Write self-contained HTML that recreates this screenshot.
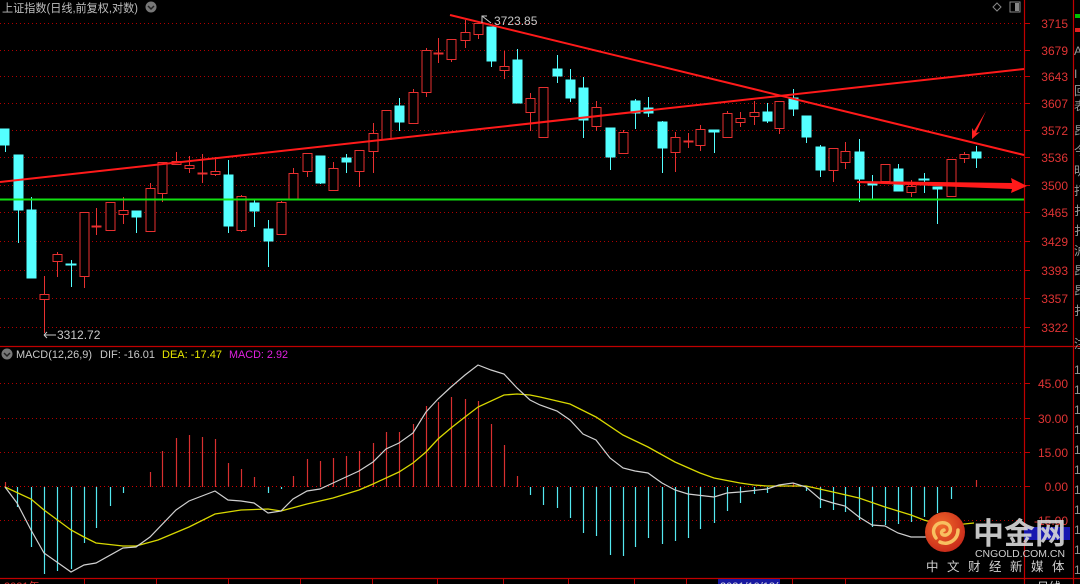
<!DOCTYPE html>
<html><head><meta charset="utf-8"><style>
html,body{margin:0;padding:0;background:#000;width:1080px;height:584px;overflow:hidden}
svg{display:block}
text{font-family:"Liberation Sans","Noto Sans CJK SC",sans-serif}
</style></head><body>
<svg width="1080" height="584" viewBox="0 0 1080 584" xmlns="http://www.w3.org/2000/svg">
<rect width="1080" height="584" fill="#000"/>
<g stroke="#b00000" stroke-width="1" stroke-dasharray="1,3">
<line x1="0" y1="23.5" x2="1024" y2="23.5"/><line x1="0" y1="50.5" x2="1024" y2="50.5"/><line x1="0" y1="76.5" x2="1024" y2="76.5"/><line x1="0" y1="103.5" x2="1024" y2="103.5"/><line x1="0" y1="130.5" x2="1024" y2="130.5"/><line x1="0" y1="157.5" x2="1024" y2="157.5"/><line x1="0" y1="185.5" x2="1024" y2="185.5"/><line x1="0" y1="212.5" x2="1024" y2="212.5"/><line x1="0" y1="241.5" x2="1024" y2="241.5"/><line x1="0" y1="270.5" x2="1024" y2="270.5"/><line x1="0" y1="298.5" x2="1024" y2="298.5"/><line x1="0" y1="327.5" x2="1024" y2="327.5"/>
<line x1="0" y1="383.5" x2="1024" y2="383.5"/><line x1="0" y1="418.5" x2="1024" y2="418.5"/><line x1="0" y1="452.5" x2="1024" y2="452.5"/><line x1="0" y1="486.5" x2="1024" y2="486.5" stroke="#d00000"/><line x1="0" y1="520.5" x2="1024" y2="520.5"/>
</g>
<g stroke="#c00000" stroke-width="1.2" fill="none">
<line x1="0" y1="346.5" x2="1080" y2="346.5"/>
<line x1="0" y1="578.5" x2="1080" y2="578.5"/>
<line x1="1024.5" y1="0" x2="1024.5" y2="584"/>
<line x1="1073.5" y1="0" x2="1073.5" y2="584"/>
</g>
<g stroke="#c00000" stroke-width="1">
<line x1="1024" y1="23.5" x2="1030" y2="23.5"/><line x1="1024" y1="50.5" x2="1030" y2="50.5"/><line x1="1024" y1="76.5" x2="1030" y2="76.5"/><line x1="1024" y1="103.5" x2="1030" y2="103.5"/><line x1="1024" y1="130.5" x2="1030" y2="130.5"/><line x1="1024" y1="157.5" x2="1030" y2="157.5"/><line x1="1024" y1="185.5" x2="1030" y2="185.5"/><line x1="1024" y1="212.5" x2="1030" y2="212.5"/><line x1="1024" y1="241.5" x2="1030" y2="241.5"/><line x1="1024" y1="270.5" x2="1030" y2="270.5"/><line x1="1024" y1="298.5" x2="1030" y2="298.5"/><line x1="1024" y1="327.5" x2="1030" y2="327.5"/>
<line x1="1024" y1="383.5" x2="1030" y2="383.5"/><line x1="1024" y1="418.5" x2="1030" y2="418.5"/><line x1="1024" y1="452.5" x2="1030" y2="452.5"/><line x1="1024" y1="486.5" x2="1030" y2="486.5"/>
<line x1="84.5" y1="578" x2="84.5" y2="584"/><line x1="156.5" y1="578" x2="156.5" y2="584"/><line x1="228.5" y1="578" x2="228.5" y2="584"/><line x1="300.5" y1="578" x2="300.5" y2="584"/><line x1="372.5" y1="578" x2="372.5" y2="584"/><line x1="437.5" y1="578" x2="437.5" y2="584"/><line x1="503.5" y1="578" x2="503.5" y2="584"/><line x1="568.5" y1="578" x2="568.5" y2="584"/><line x1="634.5" y1="578" x2="634.5" y2="584"/><line x1="686.5" y1="578" x2="686.5" y2="584"/><line x1="792.5" y1="578" x2="792.5" y2="584"/><line x1="845.5" y1="578" x2="845.5" y2="584"/>
</g>
<g fill="#e03434" font-size="12" text-anchor="end">
<text x="1068" y="28">3715</text><text x="1068" y="55">3679</text><text x="1068" y="81">3643</text><text x="1068" y="108">3607</text><text x="1068" y="135">3572</text><text x="1068" y="162">3536</text><text x="1068" y="190">3500</text><text x="1068" y="217">3465</text><text x="1068" y="246">3429</text><text x="1068" y="275">3393</text><text x="1068" y="303">3357</text><text x="1068" y="332">3322</text>
<text x="1068" y="388">45.00</text><text x="1068" y="423">30.00</text><text x="1068" y="457">15.00</text><text x="1068" y="491">0.00</text><text x="1068" y="525">-15.00</text>
</g>
<rect x="1024" y="527" width="46" height="13" fill="#1818b0"/>
<rect x="1075" y="14" width="5" height="4" fill="#00c000"/><rect x="1075" y="28" width="5" height="4" fill="#e02020"/>
<g fill="#999" font-size="12"><text x="1074" y="55">A</text><text x="1074" y="78">I</text><text x="1074" y="95">回</text><text x="1074" y="110">表</text><text x="1074" y="135">昂</text><text x="1074" y="155">今</text><text x="1074" y="175">明</text><text x="1074" y="195">打</text><text x="1074" y="215">扌</text><text x="1074" y="235">扌</text><text x="1074" y="255">沪</text><text x="1074" y="275">昂</text><text x="1074" y="295">昂</text><text x="1074" y="315">扌</text><text x="1074" y="348">注</text>
<text x="1074" y="374">1</text><text x="1074" y="394">1</text><text x="1074" y="414">1</text><text x="1074" y="434">1</text><text x="1074" y="454">1</text><text x="1074" y="474">1</text><text x="1074" y="494">1</text><text x="1074" y="514">1</text><text x="1074" y="534">1</text><text x="1074" y="554">1</text><text x="1074" y="574">1</text></g>
<text x="2" y="12" fill="#bdbdbd" font-size="11.5" textLength="136" lengthAdjust="spacingAndGlyphs">上证指数(日线,前复权,对数)</text>
<circle cx="151" cy="7" r="5.5" fill="#777"/><path d="M148 6 L151 9 L154 6" stroke="#222" stroke-width="1.5" fill="none"/>
<path d="M997 3 L1001 7 L997 11 L993 7 Z" stroke="#888" fill="none"/>
<rect x="1010" y="2" width="10" height="10" stroke="#888" fill="none"/><rect x="1015" y="3" width="4" height="8" fill="#888"/>
<g stroke-width="1">
<g stroke="#54ffff" fill="#54ffff">
<line x1="5.5" y1="129" x2="5.5" y2="152"/><rect x="0" y="129" width="9" height="16"/>
<line x1="18.5" y1="155" x2="18.5" y2="243"/><rect x="14" y="155" width="9" height="55"/>
<line x1="31.5" y1="197" x2="31.5" y2="278"/><rect x="27" y="210" width="9" height="68"/>
<line x1="71.5" y1="260" x2="71.5" y2="287"/><rect x="66" y="264" width="10" height="1"/>
<line x1="136.5" y1="211" x2="136.5" y2="233"/><rect x="132" y="211" width="9" height="6"/>
<line x1="228.5" y1="160" x2="228.5" y2="233"/><rect x="224" y="175" width="9" height="51"/>
<line x1="254.5" y1="200" x2="254.5" y2="227"/><rect x="250" y="203" width="9" height="8"/>
<line x1="268.5" y1="220" x2="268.5" y2="267"/><rect x="264" y="229" width="9" height="12"/>
<line x1="320.5" y1="156" x2="320.5" y2="184"/><rect x="316" y="156" width="9" height="27"/>
<line x1="346.5" y1="154" x2="346.5" y2="173"/><rect x="342" y="158" width="9" height="4"/>
<line x1="399.5" y1="98" x2="399.5" y2="131"/><rect x="395" y="106" width="9" height="16"/>
<line x1="491.5" y1="27" x2="491.5" y2="67"/><rect x="487" y="27" width="9" height="34"/>
<line x1="517.5" y1="49" x2="517.5" y2="103"/><rect x="513" y="60" width="9" height="43"/>
<line x1="557.5" y1="55" x2="557.5" y2="83"/><rect x="553" y="69" width="9" height="7"/>
<line x1="570.5" y1="69" x2="570.5" y2="102"/><rect x="566" y="80" width="9" height="18"/>
<line x1="583.5" y1="77" x2="583.5" y2="138"/><rect x="579" y="88" width="9" height="32"/>
<line x1="610.5" y1="128" x2="610.5" y2="170"/><rect x="606" y="128" width="9" height="29"/>
<line x1="635.5" y1="99" x2="635.5" y2="129"/><rect x="631" y="101" width="9" height="12"/>
<line x1="648.5" y1="97" x2="648.5" y2="117"/><rect x="644" y="108" width="9" height="5"/>
<line x1="662.5" y1="121" x2="662.5" y2="173"/><rect x="658" y="122" width="9" height="26"/>
<line x1="714.5" y1="130" x2="714.5" y2="153"/><rect x="709" y="130" width="10" height="2"/>
<line x1="767.5" y1="103" x2="767.5" y2="123"/><rect x="763" y="112" width="9" height="9"/>
<line x1="793.5" y1="89" x2="793.5" y2="116"/><rect x="789" y="98" width="9" height="11"/>
<line x1="806.5" y1="116" x2="806.5" y2="143"/><rect x="802" y="116" width="9" height="21"/>
<line x1="820.5" y1="145" x2="820.5" y2="177"/><rect x="816" y="147" width="9" height="23"/>
<line x1="859.5" y1="139" x2="859.5" y2="202"/><rect x="855" y="152" width="9" height="27"/>
<line x1="872.5" y1="175" x2="872.5" y2="199"/><rect x="868" y="183" width="9" height="2"/>
<line x1="898.5" y1="164" x2="898.5" y2="191"/><rect x="894" y="169" width="9" height="22"/>
<line x1="924.5" y1="173" x2="924.5" y2="193"/><rect x="919" y="179" width="10" height="1"/>
<line x1="937.5" y1="187" x2="937.5" y2="224"/><rect x="933" y="187" width="9" height="2"/>
<line x1="976.5" y1="146" x2="976.5" y2="168"/><rect x="972" y="152" width="9" height="6"/>
</g>
<g stroke="#e83030" fill="#000">
<line x1="44.5" y1="276" x2="44.5" y2="333"/><rect x="40" y="294.5" width="9" height="5"/>
<line x1="57.5" y1="252" x2="57.5" y2="277"/><rect x="53" y="254.5" width="9" height="7"/>
<line x1="84.5" y1="212" x2="84.5" y2="288"/><rect x="80" y="212.5" width="9" height="64"/>
<line x1="96.5" y1="208" x2="96.5" y2="235"/><rect x="92" y="226" width="9" height="1"/>
<line x1="110.5" y1="202" x2="110.5" y2="231"/><rect x="106" y="202.5" width="9" height="28"/>
<line x1="123.5" y1="197" x2="123.5" y2="224"/><rect x="119" y="210.5" width="9" height="4"/>
<line x1="150.5" y1="183" x2="150.5" y2="232"/><rect x="146" y="188.5" width="9" height="43"/>
<line x1="162.5" y1="162" x2="162.5" y2="202"/><rect x="158" y="162.5" width="9" height="31"/>
<line x1="176.5" y1="152" x2="176.5" y2="165"/><rect x="172" y="161.5" width="9" height="3"/>
<line x1="189.5" y1="156" x2="189.5" y2="173"/><rect x="185" y="165.5" width="9" height="3"/>
<line x1="202.5" y1="154" x2="202.5" y2="183"/><rect x="198" y="173" width="9" height="1"/>
<line x1="215.5" y1="157" x2="215.5" y2="176"/><rect x="211" y="171.5" width="9" height="3"/>
<line x1="241.5" y1="195" x2="241.5" y2="232"/><rect x="237" y="196.5" width="9" height="34"/>
<line x1="281.5" y1="201" x2="281.5" y2="234"/><rect x="277" y="202.5" width="9" height="32"/>
<line x1="293.5" y1="168" x2="293.5" y2="199"/><rect x="289" y="173.5" width="9" height="26"/>
<line x1="307.5" y1="153" x2="307.5" y2="177"/><rect x="303" y="153.5" width="9" height="18"/>
<line x1="333.5" y1="162" x2="333.5" y2="190"/><rect x="329" y="168.5" width="9" height="22"/>
<line x1="359.5" y1="150" x2="359.5" y2="187"/><rect x="355" y="150.5" width="9" height="21"/>
<line x1="373.5" y1="123" x2="373.5" y2="173"/><rect x="369" y="133.5" width="9" height="18"/>
<line x1="386.5" y1="110" x2="386.5" y2="139"/><rect x="382" y="110.5" width="9" height="29"/>
<line x1="413.5" y1="89" x2="413.5" y2="123"/><rect x="409" y="92.5" width="9" height="31"/>
<line x1="426.5" y1="48" x2="426.5" y2="97"/><rect x="422" y="50.5" width="9" height="42"/>
<line x1="438.5" y1="38" x2="438.5" y2="63"/><rect x="434" y="53" width="9" height="1"/>
<line x1="451.5" y1="39" x2="451.5" y2="62"/><rect x="447" y="39.5" width="9" height="20"/>
<line x1="465.5" y1="20" x2="465.5" y2="48"/><rect x="461" y="32.5" width="9" height="8"/>
<line x1="478.5" y1="23" x2="478.5" y2="39"/><rect x="474" y="23.5" width="9" height="11"/>
<line x1="504.5" y1="51" x2="504.5" y2="79"/><rect x="500" y="66.5" width="9" height="4"/>
<line x1="530.5" y1="93" x2="530.5" y2="131"/><rect x="526" y="98.5" width="9" height="14"/>
<line x1="543.5" y1="87" x2="543.5" y2="137"/><rect x="539" y="87.5" width="9" height="50"/>
<line x1="596.5" y1="101" x2="596.5" y2="131"/><rect x="592" y="107.5" width="9" height="19"/>
<line x1="623.5" y1="130" x2="623.5" y2="153"/><rect x="619" y="132.5" width="9" height="21"/>
<line x1="675.5" y1="132" x2="675.5" y2="172"/><rect x="671" y="137.5" width="9" height="15"/>
<line x1="688.5" y1="133" x2="688.5" y2="148"/><rect x="684" y="141" width="9" height="1"/>
<line x1="700.5" y1="125" x2="700.5" y2="151"/><rect x="696" y="129.5" width="9" height="16"/>
<line x1="727.5" y1="111" x2="727.5" y2="137"/><rect x="723" y="113.5" width="9" height="24"/>
<line x1="740.5" y1="112" x2="740.5" y2="127"/><rect x="736" y="118.5" width="9" height="4"/>
<line x1="754.5" y1="101" x2="754.5" y2="125"/><rect x="750" y="112.5" width="9" height="4"/>
<line x1="779.5" y1="101" x2="779.5" y2="134"/><rect x="775" y="101.5" width="9" height="27"/>
<line x1="833.5" y1="148" x2="833.5" y2="182"/><rect x="829" y="148.5" width="9" height="22"/>
<line x1="845.5" y1="142" x2="845.5" y2="169"/><rect x="841" y="151.5" width="9" height="11"/>
<line x1="885.5" y1="164" x2="885.5" y2="182"/><rect x="881" y="164.5" width="9" height="17"/>
<line x1="911.5" y1="180" x2="911.5" y2="197"/><rect x="907" y="186.5" width="9" height="6"/>
<line x1="951.5" y1="159" x2="951.5" y2="197"/><rect x="947" y="159.5" width="9" height="37"/>
<line x1="964.5" y1="152" x2="964.5" y2="163"/><rect x="960" y="154.5" width="9" height="4"/>
</g>
</g>
<line x1="0" y1="199.5" x2="1024" y2="199.5" stroke="#10e010" stroke-width="2"/>
<line x1="0" y1="182" x2="1024" y2="69" stroke="#ff1a1a" stroke-width="2"/>
<line x1="450" y1="15" x2="1024" y2="155" stroke="#ff1a1a" stroke-width="2"/>
<path d="M857 181 L1012 183 L1011 178 L1027 186 L1011 193 L1012 189 L857 183 Z" fill="#ff1a1a"/>
<path d="M986 111 L976 133 L980 132 L972 139 L972 128 L974 131 Z" fill="#ff2020"/>
<text x="494" y="25" fill="#c8c8c8" font-size="12">3723.85</text>
<path d="M482 23 L482 16 L487 16 M482 16 L491 23" stroke="#c8c8c8" stroke-width="1" fill="none"/>
<text x="57" y="339" fill="#c8c8c8" font-size="12">3312.72</text>
<path d="M44 335 L56 335 M44 335 L47 332 M44 335 L47 338" stroke="#c8c8c8" stroke-width="1" fill="none"/>
<circle cx="7" cy="354" r="5.5" fill="#777"/><path d="M4 353 L7 356 L10 353" stroke="#222" stroke-width="1.5" fill="none"/>
<text x="16" y="358" font-size="11" fill="#c8c8c8" textLength="76" lengthAdjust="spacingAndGlyphs">MACD(12,26,9)</text>
<text x="100" y="358" font-size="11" fill="#c8c8c8" textLength="55" lengthAdjust="spacingAndGlyphs">DIF: -16.01</text>
<text x="162" y="358" font-size="11" fill="#e8e800" textLength="60" lengthAdjust="spacingAndGlyphs">DEA: -17.47</text>
<text x="229" y="358" font-size="11" fill="#e020e0" textLength="59" lengthAdjust="spacingAndGlyphs">MACD: 2.92</text>
<g stroke="#54e8f0" stroke-width="1.2">
<line x1="17.5" y1="487" x2="17.5" y2="507"/><line x1="31.5" y1="487" x2="31.5" y2="547"/><line x1="44.5" y1="487" x2="44.5" y2="574"/><line x1="57.5" y1="487" x2="57.5" y2="571"/><line x1="71.5" y1="487" x2="71.5" y2="569"/><line x1="84.5" y1="487" x2="84.5" y2="543"/><line x1="96.5" y1="487" x2="96.5" y2="528"/><line x1="110.5" y1="487" x2="110.5" y2="506"/><line x1="123.5" y1="487" x2="123.5" y2="493"/>
<line x1="268.5" y1="487" x2="268.5" y2="493"/><line x1="281.5" y1="487" x2="281.5" y2="489"/><line x1="530.5" y1="487" x2="530.5" y2="495"/>
<line x1="543.5" y1="487" x2="543.5" y2="505"/><line x1="557.5" y1="487" x2="557.5" y2="508"/><line x1="570.5" y1="487" x2="570.5" y2="518"/><line x1="583.5" y1="487" x2="583.5" y2="533"/><line x1="596.5" y1="487" x2="596.5" y2="536"/><line x1="610.5" y1="487" x2="610.5" y2="555"/><line x1="623.5" y1="487" x2="623.5" y2="556"/><line x1="635.5" y1="487" x2="635.5" y2="547"/><line x1="648.5" y1="487" x2="648.5" y2="538"/><line x1="662.5" y1="487" x2="662.5" y2="544"/><line x1="675.5" y1="487" x2="675.5" y2="541"/><line x1="688.5" y1="487" x2="688.5" y2="538"/><line x1="700.5" y1="487" x2="700.5" y2="529"/><line x1="714.5" y1="487" x2="714.5" y2="523"/><line x1="727.5" y1="487" x2="727.5" y2="511"/><line x1="740.5" y1="487" x2="740.5" y2="503"/><line x1="754.5" y1="487" x2="754.5" y2="494"/><line x1="767.5" y1="487" x2="767.5" y2="493"/>
<line x1="806.5" y1="487" x2="806.5" y2="491"/><line x1="820.5" y1="487" x2="820.5" y2="508"/><line x1="833.5" y1="487" x2="833.5" y2="510"/><line x1="845.5" y1="487" x2="845.5" y2="512"/><line x1="859.5" y1="487" x2="859.5" y2="520"/><line x1="872.5" y1="487" x2="872.5" y2="527"/><line x1="885.5" y1="487" x2="885.5" y2="525"/><line x1="898.5" y1="487" x2="898.5" y2="524"/><line x1="911.5" y1="487" x2="911.5" y2="522"/><line x1="924.5" y1="487" x2="924.5" y2="517"/><line x1="937.5" y1="487" x2="937.5" y2="513"/><line x1="951.5" y1="487" x2="951.5" y2="499"/>
</g>
<g stroke="#d83030" stroke-width="1.2">
<line x1="5.5" y1="482" x2="5.5" y2="487"/><line x1="150.5" y1="487" x2="150.5" y2="472"/><line x1="162.5" y1="487" x2="162.5" y2="451"/><line x1="176.5" y1="487" x2="176.5" y2="438"/><line x1="189.5" y1="487" x2="189.5" y2="435"/><line x1="202.5" y1="487" x2="202.5" y2="437"/><line x1="215.5" y1="487" x2="215.5" y2="439"/><line x1="228.5" y1="487" x2="228.5" y2="463"/><line x1="241.5" y1="487" x2="241.5" y2="469"/><line x1="254.5" y1="487" x2="254.5" y2="477"/>
<line x1="293.5" y1="487" x2="293.5" y2="476"/><line x1="307.5" y1="487" x2="307.5" y2="459"/><line x1="320.5" y1="487" x2="320.5" y2="461"/><line x1="333.5" y1="487" x2="333.5" y2="458"/><line x1="346.5" y1="487" x2="346.5" y2="456"/><line x1="359.5" y1="487" x2="359.5" y2="451"/><line x1="373.5" y1="487" x2="373.5" y2="443"/><line x1="386.5" y1="487" x2="386.5" y2="432"/><line x1="399.5" y1="487" x2="399.5" y2="432"/><line x1="413.5" y1="487" x2="413.5" y2="424"/><line x1="426.5" y1="487" x2="426.5" y2="406"/><line x1="438.5" y1="487" x2="438.5" y2="402"/><line x1="451.5" y1="487" x2="451.5" y2="397"/><line x1="465.5" y1="487" x2="465.5" y2="399"/><line x1="478.5" y1="487" x2="478.5" y2="401"/><line x1="491.5" y1="487" x2="491.5" y2="424"/><line x1="504.5" y1="487" x2="504.5" y2="445"/><line x1="517.5" y1="487" x2="517.5" y2="476"/>
<line x1="793.5" y1="487" x2="793.5" y2="483"/><line x1="976.5" y1="487" x2="976.5" y2="480"/>
</g>
<polyline fill="none" stroke="#d8d800" stroke-width="1.3" points="5,487 31,499 44,510 71,530 84,537 96,543 123,546 136,546 158,540 189,527 215,514 241,510 268,509 281,511 307,504 333,498 359,490 373,484 399,472 413,463 426,452 438,439 451,428 465,417 478,407 504,395 517,394 530,395 540,397 570,404 596,417 623,435 648,447 675,462 700,473 714,478 740,483 754,485 767,486 793,486 806,486 833,492 859,498 885,507 911,515 924,520 945,526 974,523"/>
<polyline fill="none" stroke="#d0d0d0" stroke-width="1.2" points="5,487 17,503 31,530 44,553 71,572 84,565 96,563 123,548 136,547 150,537 176,510 189,501 215,491 228,500 241,501 254,503 268,513 281,511 293,499 307,491 320,489 333,483 346,477 359,471 373,462 386,449 399,443 413,433 426,412 438,399 451,387 465,375 478,365 491,370 504,374 517,388 530,400 540,405 557,411 570,420 583,434 596,440 610,458 623,468 635,471 648,473 662,483 675,490 688,494 714,497 727,493 740,492 767,489 779,485 793,483 806,487 820,499 833,503 845,506 859,517 872,525 885,526 898,533 911,537 930,537"/>
<text x="4" y="590" font-size="11" fill="#e03434">2021年</text>
<rect x="718" y="579" width="62" height="6" fill="#1818a0"/>
<text x="720" y="590" font-size="11" fill="#ddd">2021/10/18(</text>
<text x="1037" y="591" font-size="12" fill="#ccc">日线</text>
<defs><radialGradient id="lg" cx="0.4" cy="0.35" r="0.7"><stop offset="0" stop-color="#f06a2a"/><stop offset="1" stop-color="#c8281a"/></radialGradient></defs>
<circle cx="945" cy="532" r="20" fill="url(#lg)"/>
<path d="M936 538 C930 530 936 521 945 523 C952 525 952 533 946 535 C941 536 940 531 944 530 M940 542 C948 546 958 540 958 530" stroke="#f8c060" stroke-width="3.5" fill="none" stroke-linecap="round"/>
<text x="973" y="544" font-size="30" font-weight="bold" fill="#d8d8d8" fill-opacity="0.9" textLength="93" lengthAdjust="spacingAndGlyphs">中金网</text>
<text x="975" y="557" font-size="10.5" fill="#cfcfcf" textLength="90" lengthAdjust="spacingAndGlyphs">CNGOLD.COM.CN</text>
<text x="926" y="571" font-size="12.5" fill="#cfcfcf" letter-spacing="8.5">中文财经新媒体</text>
</svg>
</body></html>
